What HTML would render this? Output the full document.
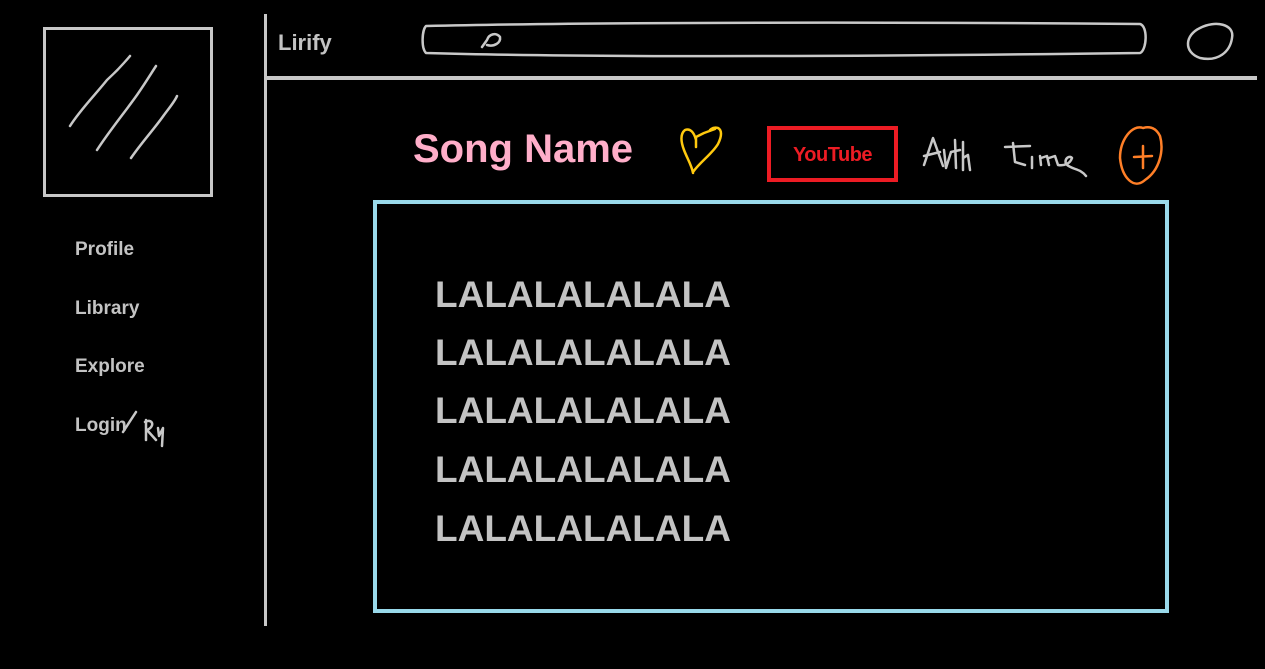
<!DOCTYPE html>
<html><head><meta charset="utf-8"><style>
body{margin:0;width:1265px;height:669px;background:#000;position:relative;overflow:hidden;font-family:"Liberation Sans",sans-serif;font-weight:bold}
.a{position:absolute}
.nav{position:absolute;left:75px;color:#c3c3c3;font-size:19px;line-height:20px}
.la{position:absolute;left:435px;color:#c3c3c3;font-size:37px;line-height:40px;letter-spacing:0px}
</style></head><body>
<div class="a" style="left:43px;top:27px;width:164px;height:164px;border:3px solid #c8c8c8"></div>
<svg class="a" style="left:0;top:0" width="1265" height="669" fill="none" stroke-linecap="round" stroke-linejoin="round">
<g stroke="#c8c8c8" stroke-width="2.5">
<path d="M70 126 C80 110 95 95 107 80 C118 70 125 62 130 56"/>
<path d="M97 150 C110 130 125 112 137 95 C146 82 152 72 156 66"/>
<path d="M131 158 C142 142 155 128 164 115 C170 107 175 101 177 96"/>
<path d="M426 26 C600 22 900 22 1140 24 C1148 26 1147 50 1140 53 C900 56 600 58 426 53 C421 48 422 30 426 26Z"/>
<path d="M482 47 L487 40 C489 34 496 32 500 37 C501 43 494 47 487 45"/>
<path d="M1200 28 C1215 20 1235 24 1232 38 C1230 52 1218 62 1200 58 C1183 52 1185 35 1200 28Z"/>
<path d="M924 165 L933 138 L943 166 M924 156 L940 152 M944 150 L946 168 L951 152 M955 140 L956 168 M951 152 L960 150 M963 142 L963 170 M963 158 L968 155 L970 170"/>
<path d="M1005 147 L1030 146 M1013 143 L1015 162 L1025 165 M1032 157 L1032 168 M1040 156 L1041 165 M1041 158 L1047 156 L1049 165 M1049 158 L1055 156 L1058 165 C1064 166 1070 164 1072 158 C1070 155 1064 158 1066 164 C1072 170 1080 168 1086 176"/>
<path d="M123 432 L136 412 M146 420 L146 440 M145 422 C152 418 156 426 147 430 L156 440 M158 428 L159 436 L163 428 L162 446"/>
</g>
<path d="M696 147 L696 137 L704 133 L715 129 M696 140 C694 132 690 128 685 130 C680 134 681 142 684 150 C687 158 692 166 693 173 M693 172 C700 162 712 154 718 144 C722 136 722 130 718 128 C714 127 712 128 710 130" stroke="#ffc90e" stroke-width="2.5"/>
<path d="M1143 128 C1132 124 1120 140 1120 158 C1122 178 1134 190 1145 180 C1160 170 1164 150 1160 136 C1156 128 1150 126 1143 128Z M1134 157 L1152 156 M1143 146 L1143 168" stroke="#ff7f27" stroke-width="2.5"/>
</svg>
<div class="a" style="left:264px;top:14px;width:3px;height:612px;background:#c8c8c8"></div>
<div class="a" style="left:266px;top:76px;width:991px;height:4px;background:#c8c8c8"></div>
<div class="a" style="left:278px;top:30px;color:#c3c3c3;font-size:22px;line-height:26px">Lirify</div>
<div class="a" style="left:413px;top:127px;color:#ffaec9;font-size:40px;line-height:44px">Song Name</div>
<div class="a" style="left:767px;top:126px;width:123px;height:48px;border:4px solid #ed1c24;color:#ed1c24;font-size:20px;line-height:50px;text-align:center;letter-spacing:-0.5px">YouTube</div>
<div class="a" style="left:373px;top:200px;width:788px;height:405px;border:4px solid #99d9ea"></div>
<div class="la" style="top:275px">LALALALALALA</div>
<div class="la" style="top:333px">LALALALALALA</div>
<div class="la" style="top:391px">LALALALALALA</div>
<div class="la" style="top:450px">LALALALALALA</div>
<div class="la" style="top:509px">LALALALALALA</div>
<div class="nav" style="top:240px">Profile</div>
<div class="nav" style="top:299px">Library</div>
<div class="nav" style="top:357px">Explore</div>
<div class="nav" style="top:416px">Login</div>
</body></html>
